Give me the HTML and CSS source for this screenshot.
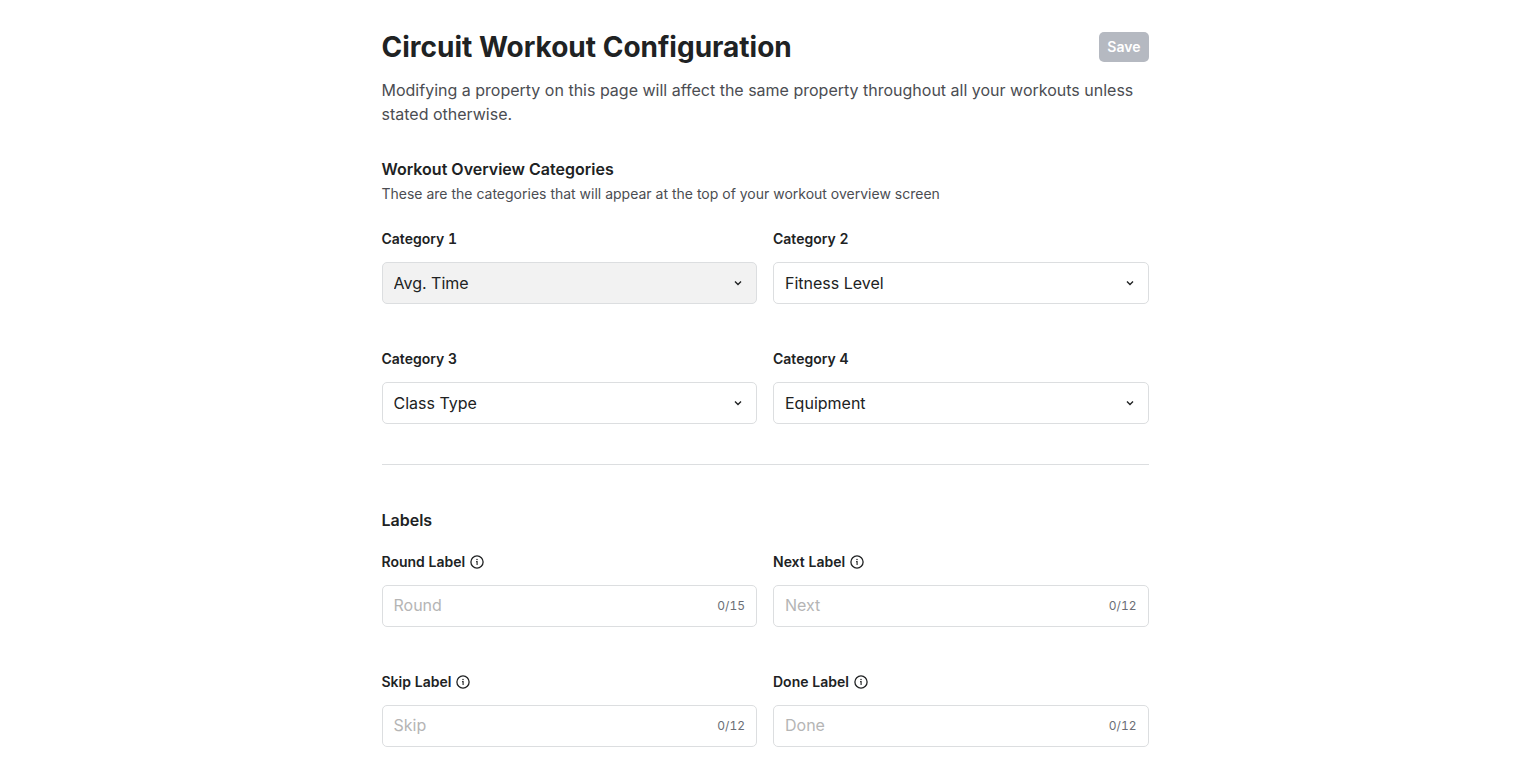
FILE: index.html
```html
<!DOCTYPE html>
<html lang="en">
<head>
<meta charset="utf-8">
<meta name="viewport" content="width=device-width, initial-scale=1">
<title>Circuit Workout Configuration</title>
<link rel="stylesheet" href="styles.css">
</head>
<body>
<svg class="sprite" aria-hidden="true">
  <symbol id="info" viewBox="0 0 14 14">
    <circle cx="7" cy="7" r="6.1" fill="none" stroke="currentColor" stroke-width="1.3"/>
    <path d="M6.1 6.6H7.1V9.9" fill="none" stroke="currentColor" stroke-width="1.1"/>
    <circle cx="7" cy="4.5" r=".75" fill="currentColor"/>
  </symbol>
  <symbol id="chevron" viewBox="0 0 8 6">
    <path d="M1 1.4L4 4.4L7 1.4" fill="none" stroke="currentColor" stroke-width="1.4"/>
  </symbol>
</svg>
<main class="page">
  <header class="page-header">
    <div class="title-row">
      <h1 class="title">Circuit Workout Configuration</h1>
      <button class="save" type="submit" form="config" disabled>Save</button>
    </div>
    <p class="intro">Modifying a property on this page will affect the same property throughout all your workouts unless stated otherwise.</p>
  </header>
  <form id="config">
    <section class="section">
      <h2 class="section-title">Workout Overview Categories</h2>
      <p class="section-note">These are the categories that will appear at the top of your workout overview screen</p>
      <div class="grid">
        <div class="field">
          <label class="label" for="cat1">Category 1</label>
          <div class="control"><select class="box" id="cat1" disabled><option>Avg. Time</option></select><svg class="chevron" aria-hidden="true"><use href="#chevron"/></svg></div>
        </div>
        <div class="field">
          <label class="label" for="cat2">Category 2</label>
          <div class="control"><select class="box" id="cat2"><option>Fitness Level</option></select><svg class="chevron" aria-hidden="true"><use href="#chevron"/></svg></div>
        </div>
        <div class="field">
          <label class="label" for="cat3">Category 3</label>
          <div class="control"><select class="box" id="cat3"><option>Class Type</option></select><svg class="chevron" aria-hidden="true"><use href="#chevron"/></svg></div>
        </div>
        <div class="field">
          <label class="label" for="cat4">Category 4</label>
          <div class="control"><select class="box" id="cat4"><option>Equipment</option></select><svg class="chevron" aria-hidden="true"><use href="#chevron"/></svg></div>
        </div>
      </div>
    </section>
    <hr class="divider">
    <section class="section">
      <h2 class="section-title">Labels</h2>
      <div class="grid">
        <div class="field">
          <label class="label" for="round">Round Label <svg class="info" aria-hidden="true"><use href="#info"/></svg></label>
          <div class="control"><input class="box" id="round" type="text" maxlength="15" placeholder="Round"><span class="count">0/15</span></div>
        </div>
        <div class="field">
          <label class="label" for="next">Next Label <svg class="info" aria-hidden="true"><use href="#info"/></svg></label>
          <div class="control"><input class="box" id="next" type="text" maxlength="12" placeholder="Next"><span class="count">0/12</span></div>
        </div>
        <div class="field">
          <label class="label" for="skip">Skip Label <svg class="info" aria-hidden="true"><use href="#info"/></svg></label>
          <div class="control"><input class="box" id="skip" type="text" maxlength="12" placeholder="Skip"><span class="count">0/12</span></div>
        </div>
        <div class="field">
          <label class="label" for="done">Done Label <svg class="info" aria-hidden="true"><use href="#info"/></svg></label>
          <div class="control"><input class="box" id="done" type="text" maxlength="12" placeholder="Done"><span class="count">0/12</span></div>
        </div>
      </div>
    </section>
  </form>
</main>
</body>
</html>
```
FILE: styles.css
```css
* {
  box-sizing: border-box;
}

body,
h1,
h2,
p {
  margin: 0;
}

body {
  background: #fff;
  color: #202223;
  font-family: Inter, "Liberation Sans", sans-serif;
  font-size: 16px;
  line-height: 24px;
}

.sprite {
  position: absolute;
  width: 0;
  height: 0;
}

.page {
  max-width: 767px;
  margin: 0 auto;
  padding: 28px 0;
}

.title-row {
  display: flex;
  align-items: center;
  justify-content: space-between;
  gap: 16px;
}

.title {
  font-size: 28px;
  font-weight: 700;
  line-height: 38px;
}

.save {
  height: 30px;
  padding: 0 8px;
  border: 0;
  border-radius: 5px;
  background: #b5b9c1;
  color: #fff;
  font: 600 14px/20px Inter, "Liberation Sans", sans-serif;
}

.intro {
  margin-top: 12px;
  color: #4b4d52;
}

.section {
  padding-top: 31px;
}

.section-title {
  font-size: 16px;
  font-weight: 600;
  line-height: 24px;
}

.section-note {
  margin-top: 2px;
  color: #4b4d52;
  font-size: 14px;
  line-height: 22px;
}

.grid {
  display: grid;
  grid-template-columns: 1fr 1fr;
  gap: 44px 16px;
  margin-top: 19px;
}

.section-note + .grid {
  margin-top: 23px;
}

.label {
  display: flex;
  align-items: center;
  gap: 5px;
  margin-bottom: 12px;
  font-size: 14px;
  font-weight: 600;
  line-height: 22px;
  font-variant-numeric: tabular-nums;
}

.info {
  width: 14px;
  height: 14px;
}

.control {
  position: relative;
}

.box {
  display: block;
  width: 100%;
  height: 42px;
  padding: 0 11px;
  border: 1px solid #dcdee0;
  border-radius: 5px;
  background: #fff;
  color: #202223;
  font: 400 16px/24px Inter, "Liberation Sans", sans-serif;
  opacity: 1;
  appearance: none;
}

input.box {
  padding-bottom: 2px;
}

.box:disabled {
  background: #f2f2f2;
}

.box::placeholder {
  color: #b5b5b5;
  opacity: 1;
}

.chevron {
  position: absolute;
  top: 18px;
  right: 15px;
  width: 8px;
  height: 6px;
  pointer-events: none;
}

.count {
  position: absolute;
  top: 10px;
  right: 12px;
  color: #6b6e76;
  font-size: 12px;
  line-height: 22px;
  font-variant-numeric: tabular-nums;
}

.divider {
  height: 1px;
  margin: 40px 0 12px;
  border: 0;
  background: #dcdee0;
}
```
